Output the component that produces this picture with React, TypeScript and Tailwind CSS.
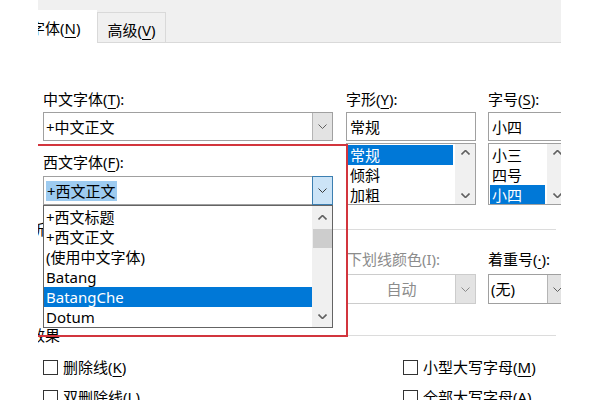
import React from "react";

const U = ({ children }: { children: React.ReactNode }) => (
  <span className="underline underline-offset-[3px] decoration-1">{children}</span>
);

function ChevDown({ color = "#606060", bold = false }: { color?: string; bold?: boolean }) {
  return (
    <svg width="9" height="5" viewBox="0 0 9 5" className="block">
      <path d="M0.5 0.5 L4.5 4.5 L8.5 0.5" fill="none" stroke={color} strokeWidth={bold ? 1.6 : 1} />
    </svg>
  );
}

function ChevUp({ color = "#606060" }: { color?: string }) {
  return (
    <svg width="9" height="5" viewBox="0 0 9 5" className="block">
      <path d="M0.5 4.5 L4.5 0.5 L8.5 4.5" fill="none" stroke={color} strokeWidth={1.6} />
    </svg>
  );
}

function Combo({
  text,
  focused,
  disabled,
  center,
  selected,
  h,
}: {
  text: string;
  focused?: boolean;
  disabled?: boolean;
  center?: boolean;
  selected?: boolean;
  h: string;
}) {
  return (
    <div className={`flex ${h} border ${disabled ? "border-[#cccccc]" : "border-[#a0a0a0]"} bg-white`}>
      <div className={`flex-1 flex items-center ${center ? "justify-center" : "pl-[2px]"} ${disabled ? "text-[#8c8c8c]" : ""} overflow-hidden whitespace-nowrap`}>
        <span className={selected ? "bg-[#9dcbf0] px-px" : ""}>{text}</span>
      </div>
      {focused ? (
        <div className="w-[21px] -my-px -mr-px border border-[#3c7fb1] bg-[#cce4f7] flex items-center justify-center">
          <ChevDown color="#3a3a3a" />
        </div>
      ) : (
        <div className={`w-[20px] bg-[#e3e3e3] border-l ${disabled ? "border-[#cccccc]" : "border-[#b5b5b5]"} flex items-center justify-center`}>
          <ChevDown color={disabled ? "#8a8a8a" : "#606060"} />
        </div>
      )}
    </div>
  );
}

function ListBox({ items, sel }: { items: string[]; sel: number }) {
  return (
    <div className="mt-[2px] h-[62px] border border-[#a0a0a0] flex bg-white">
      <div className="flex-1 pt-px pl-px pr-[2px] overflow-hidden">
        {items.map((t, i) => (
          <div
            key={t}
            className={`h-[20px] leading-[20px] pl-[2px] whitespace-nowrap ${i === sel ? "bg-[#0078d7] text-white" : ""}`}
          >
            {t}
          </div>
        ))}
      </div>
      <div className="w-[20px] bg-[#f0f0f0] flex flex-col items-center justify-between py-[6px]">
        <ChevUp />
        <ChevDown bold />
      </div>
    </div>
  );
}

function Check({ children }: { children: React.ReactNode }) {
  return (
    <div className="flex items-center h-[20px] whitespace-nowrap">
      <div className="w-[15px] h-[15px] border border-[#333333] bg-white shrink-0" />
      <span className="ml-[5px]">{children}</span>
    </div>
  );
}

function Header({ text }: { text: string }) {
  return (
    <div className="flex items-center h-[20px]">
      <span className="-ml-[13px] whitespace-nowrap">{text}</span>
      <div className="flex-1 h-px bg-[#dcdcdc] ml-[6px]" />
    </div>
  );
}

export default function App() {
  const dropItems = ["+西文标题", "+西文正文", "(使用中文字体)", "Batang", "BatangChe", "Dotum"];
  return (
    <div className="w-[600px] h-[400px] bg-white flex overflow-hidden text-[15px] leading-[20px] text-black font-['Noto_Sans','Noto_Sans_CJK_SC',sans-serif]">
      <div className="w-[38px] shrink-0" />
      <div className="relative w-[523px] shrink-0 h-full overflow-hidden">
        {/* tabs */}
        <div className="h-[43px] bg-[#f0f0f0] border-b border-[#d9d9d9] flex items-end">
          <div className="w-[59px] h-[33px] -mb-px bg-white flex items-center pt-[2px] whitespace-nowrap relative z-10">
            <span className="-ml-[8px]">
              字体(<U>N</U>)
            </span>
          </div>
          <div className="w-[69px] h-[30px] border border-b-0 border-[#d9d9d9] flex items-center justify-center pt-[4px] whitespace-nowrap">
            高级(<U>V</U>)
          </div>
        </div>

        <div className="px-[5px] pt-[46px]">
          {/* row 1 */}
          <div className="flex">
            <div className="w-[290px] shrink-0">
              <div className="h-[20px]">
                中文字体(<U>T</U>):
              </div>
              <div className="mt-[3px]">
                <Combo text="+中文正文" h="h-[29px]" />
              </div>
              <div className="mt-[11px] h-[20px]">
                西文字体(<U>F</U>):
              </div>
              <div className="mt-[4px]">
                <Combo text="+西文正文" h="h-[29px]" focused selected />
              </div>
            </div>
            <div className="ml-[13px] w-[130px] shrink-0">
              <div className="h-[20px] whitespace-nowrap">
                字形(<U>Y</U>):
              </div>
              <div className="mt-[3px] h-[29px] border border-[#a0a0a0] pl-[3px] flex items-center">常规</div>
              <ListBox items={["常规", "倾斜", "加粗"]} sel={0} />
            </div>
            <div className="ml-[12px] w-[80px] shrink-0">
              <div className="h-[20px] whitespace-nowrap">
                字号(<U>S</U>):
              </div>
              <div className="mt-[3px] h-[29px] border border-[#a0a0a0] pl-[3px] flex items-center">小四</div>
              <ListBox items={["小三", "四号", "小四"]} sel={2} />
            </div>
          </div>

          {/* all text header */}
          <div className="mt-[14px]">
            <Header text="所有文字" />
          </div>

          {/* row 2 (left part is covered by the open list) */}
          <div className="flex mt-[10px]">
            <div className="w-[290px] shrink-0 h-[55px]" />
            <div className="ml-[14px] w-[129px] shrink-0">
              <div className="h-[20px] whitespace-nowrap text-[#8c8c8c]">下划线颜色(I):</div>
              <div className="mt-[5px]">
                <Combo text="自动" h="h-[30px]" center disabled />
              </div>
            </div>
            <div className="ml-[12px] w-[80px] shrink-0">
              <div className="h-[20px] whitespace-nowrap">
                着重号(<U>·</U>):
              </div>
              <div className="mt-[5px]">
                <Combo text="(无)" h="h-[30px]" />
              </div>
            </div>
          </div>

          {/* effects header */}
          <div className="mt-[21px]">
            <Header text="效果" />
          </div>

          <div className="mt-[12px] flex">
            <div className="w-[360px] shrink-0">
              <Check>
                删除线(<U>K</U>)
              </Check>
            </div>
            <Check>
              小型大写字母(<U>M</U>)
            </Check>
          </div>
          <div className="mt-[10px] flex">
            <div className="w-[360px] shrink-0">
              <Check>
                双删除线(<U>L</U>)
              </Check>
            </div>
            <Check>
              全部大写字母(<U>A</U>)
            </Check>
          </div>
        </div>

        {/* open dropdown list */}
        <div className="absolute left-[5px] top-[205px] w-[290px] h-[123px] border border-[#646464] bg-white z-10 flex">
          <div className="flex-1 pt-px">
            {dropItems.map((t, i) => (
              <div
                key={t}
                className={`h-[20px] leading-[20px] pl-[2px] whitespace-nowrap ${i === 4 ? "bg-[#0078d7] text-white" : ""}`}
              >
                {t}
              </div>
            ))}
          </div>
          <div className="w-[20px] bg-[#f0f0f0] flex flex-col items-center">
            <div className="h-[22px] flex items-center justify-center">
              <ChevUp />
            </div>
            <div className="w-[19px] h-[19px] bg-[#cdcdcd] mt-px" />
            <div className="flex-1" />
            <div className="h-[22px] flex items-center justify-center">
              <ChevDown bold />
            </div>
          </div>
        </div>

        {/* red highlight rectangle */}
        <div className="absolute left-[-4px] top-[144px] w-[314px] h-[193px] border-2 border-[#d2353d] z-20 pointer-events-none" />
      </div>
      <div className="flex-1" />
    </div>
  );
}
